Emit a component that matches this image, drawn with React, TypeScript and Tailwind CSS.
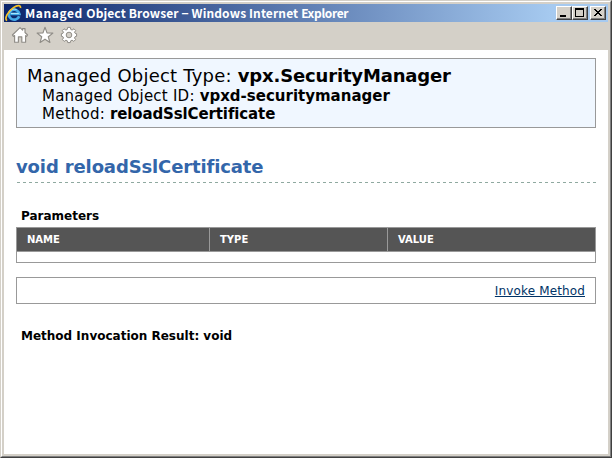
import React from "react";

function IELogo() {
  return (
    <svg width="18" height="18" viewBox="0 0 18 18" className="block shrink-0">
      <path d="M15.2 12.2 A5.3 5 0 1 1 15.4 9.9 H6.5" fill="none" stroke="#45abe8" strokeWidth="2.7" />
      <path d="M14.8 9.5 H7 M5.2 8.6 A5 4.6 0 0 1 12.6 5.6" fill="none" stroke="#a6e6fb" strokeWidth="1.1" />
      <path d="M3 16.6 C0.2 14.6 3.6 7.4 9.4 3.6 C13.6 0.9 17 1 16.4 4" fill="none" stroke="#f5c126" strokeWidth="1.7" />
    </svg>
  );
}

function HomeIcon() {
  return (
    <svg width="18" height="18" viewBox="0 0 18 18" className="block">
      <path d="M9 1.7 L11.6 4.2 V2.6 H14 V6.5 L16.6 9 L15.6 10.3 L14.6 9.6 V16.2 H10.8 V10.8 H7.4 V16.2 H3.6 V9.6 L2.4 10.3 L1.4 9 Z" fill="#fff" stroke="#8f8c86" strokeWidth="1.15" strokeLinejoin="round" />
    </svg>
  );
}

function StarIcon() {
  return (
    <svg width="18" height="18" viewBox="0 0 18 18" className="block">
      <path d="M9 1.3 L11 6.9 L16.9 7.1 L12.3 10.8 L13.9 16.5 L9 13.2 L4.1 16.5 L5.7 10.8 L1.1 7.1 L7 6.9 Z" fill="#fff" stroke="#8f8c86" strokeWidth="1.15" strokeLinejoin="round" />
    </svg>
  );
}

function GearIcon() {
  return (
    <svg width="18" height="18" viewBox="0 0 18 18" className="block">
      <path fillRule="evenodd" d="M7.7 1.4 H10.3 L10.8 3.5 L12.1 4 L14 2.8 L15.7 4.6 L14.5 6.2 L15 7.2 L16.6 7.7 V10.3 L15 10.8 L14.5 11.9 L15.6 13.6 L13.8 15.4 L12.1 14.2 L10.8 14.7 L10.3 16.6 H7.7 L7.2 14.7 L5.9 14.2 L4.2 15.4 L2.4 13.6 L3.5 11.9 L3 10.8 L1.4 10.3 V7.7 L3 7.2 L3.5 6.2 L2.3 4.6 L4 2.8 L5.9 4 L7.2 3.5 Z M9 6.2 A2.8 2.8 0 1 0 9 11.8 A2.8 2.8 0 1 0 9 6.2 Z" fill="#fff" stroke="#8f8c86" strokeWidth="1" strokeLinejoin="round" />
    </svg>
  );
}

function CaptionButton({ children }: { children: React.ReactNode }) {
  return (
    <div className="h-[14px] w-4 border-t border-l border-r border-b border-t-white border-l-white border-r-[#404040] border-b-[#404040] bg-[#d4d0c8] shadow-[inset_-1px_-1px_0_#808080]">
      <svg width="14" height="12" viewBox="0 0 14 12" shapeRendering="crispEdges" className="block">
        {children}
      </svg>
    </div>
  );
}

export default function App() {
  return (
    <div className="flex h-[458px] w-[612px] border-t border-l border-r border-b border-t-[#d4d0c8] border-l-[#d4d0c8] border-r-[#404040] border-b-[#404040] font-['DejaVu_Sans',sans-serif] text-black">
      <div className="flex w-full flex-col border-t border-l border-r border-b border-t-white border-l-white border-r-[#808080] border-b-[#808080] bg-[#d4d0c8] p-0.5 whitespace-nowrap">
        <header className="flex h-[18px] shrink-0 items-center bg-[linear-gradient(90deg,#0a246a,#a6caf0_548px)] pr-0.5">
          <IELogo />
          <h1 className="ml-[3px] flex-1 font-['Noto_Sans_CJK_JP',sans-serif] text-[12px] leading-[18px] font-bold tracking-[0.12px] text-white">
            <span className="tracking-[0.6px]">Managed </span>
            Object Browser − Windows Internet{" "}
            <span className="tracking-[-0.35px]">Explorer</span>
          </h1>
          <div className="flex">
            <CaptionButton>
              <rect x="3" y="8" width="6" height="2" fill="#000" />
            </CaptionButton>
            <CaptionButton>
              <path d="M2 1 H11 V10 H2 Z M3 3 V9 H10 V3 Z" fillRule="evenodd" fill="#000" />
            </CaptionButton>
            <div className="ml-0.5">
              <CaptionButton>
                <path d="M3 2h2v1h1v1h2v-1h1v-1h2v1h-1v1h-1v1h-1v1h1v1h1v1h1v1h-2v-1h-1v-1h-2v1h-1v1h-2v-1h1v-1h1v-1h1v-1h-1v-1h-1v-1h-1z" fill="#000" />
              </CaptionButton>
            </div>
          </div>
        </header>

        <nav className="flex h-7 shrink-0 gap-[6.5px] pt-1 pl-[7px]">
          <HomeIcon />
          <StarIcon />
          <GearIcon />
        </nav>

        <main className="flex flex-1 flex-col bg-white px-3 pt-2">
          <section className="h-[70px] border border-[#999] bg-[#f0f7ff] pt-[7px] pl-[10px]">
            <div className="h-[21px] text-[18px] leading-5">
              <span className="tracking-[0.22px]">Managed Object Type: </span>
              <b className="tracking-[-0.16px]">vpx.SecurityManager</b>
            </div>
            <div className="h-[18px] pl-[15px] text-[15px] leading-[18px]">
              <span className="tracking-[0.23px]">Managed Object ID: </span>
              <b>vpxd-securitymanager</b>
            </div>
            <div className="h-[18px] pl-[15px] text-[15px] leading-[18px]">
              <span className="tracking-[0.23px]">Method: </span>
              <b className="tracking-[-0.12px]">reloadSslCertificate</b>
            </div>
          </section>

          <h2 className="mt-7 h-[26px] text-[18px] leading-[22px] font-bold text-[#3366aa]">
            <span className="tracking-[-0.13px]">void reloadSslCertificate</span>
          </h2>
          <div className="ml-px h-px bg-[repeating-linear-gradient(90deg,#8fa9a0_0_3px,transparent_3px_6px)]" />

          <h3 className="mt-[25px] h-[19px] pl-[5px] text-[12px] leading-4 font-bold">
            <span>Parameters</span>
          </h3>
          <div className="border border-[#999]">
            <div className="grid h-[23px] grid-cols-[193px_178px_1fr] bg-[#555] text-[10px] leading-[23px] font-bold text-white">
              <div className="border-r border-[#999] pl-[10px]"><span>NAME</span></div>
              <div className="border-r border-[#999] pl-[10px]"><span>TYPE</span></div>
              <div className="pl-[10px]"><span>VALUE</span></div>
            </div>
            <div className="h-[11px] border-t border-[#999]" />
          </div>

          <div className="mt-[14px] h-[27px] border border-[#999] pt-px pr-[10px] text-right text-[12px] leading-[25px]">
            <a href="#" className="tracking-[0.14px] text-[#003366] underline">Invoke Method</a>
          </div>

          <h3 className="mt-6 pl-[5px] text-[12px] leading-4 font-bold">
            <span>Method Invocation Result: void</span>
          </h3>
        </main>
      </div>
    </div>
  );
}
